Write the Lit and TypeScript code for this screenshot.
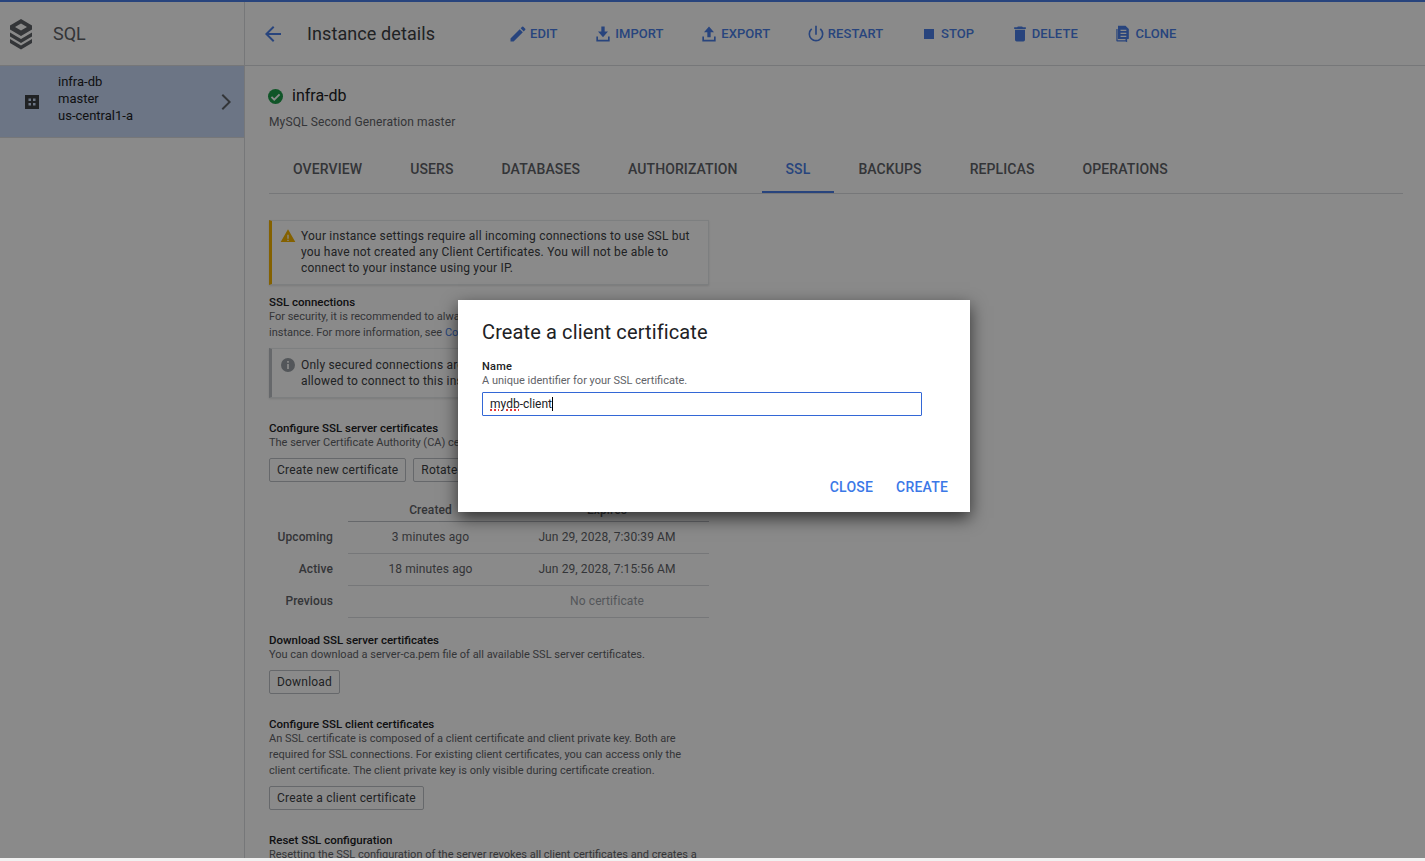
import { LitElement, html, css, svg } from 'lit';
import { customElement } from 'lit/decorators.js';

const ACTIONS = [
	{ label: 'EDIT', icon: svg`<path d="M3 17.25V21h3.75L17.81 9.94l-3.75-3.75L3 17.25zM20.71 7.04a1 1 0 0 0 0-1.41l-2.34-2.34a1 1 0 0 0-1.41 0l-1.83 1.83 3.75 3.750 1.83-1.83z"/>` },
	{ label: 'IMPORT', icon: svg`<path d="M10 3h4v6h4l-6 7-6-7h4V3z"/><path d="M4 15h2v4h12v-4h2v6H4z"/>` },
	{ label: 'EXPORT', icon: svg`<path d="M10 16v-6H6l6-7 6 7h-4v6h-4z"/><path d="M4 15h2v4h12v-4h2v6H4z"/>` },
	{ label: 'RESTART', icon: svg`<path d="M13 2h-2v11h2V2zm4.830 3.170-1.420 1.420A6.920 6.920 0 0 1 19 12a7 7 0 1 1-11.420-5.420L6.170 5.170A8.960 8.960 0 0 0 3 12a9 9 0 0 0 18 0c0-2.740-1.230-5.180-3.170-6.830z"/>` },
	{ label: 'STOP', icon: svg`<path d="M6 6h12v12H6z"/>` },
	{ label: 'DELETE', icon: svg`<path d="M6 19a2 2 0 0 0 2 2h8a2 2 0 0 0 2-2V7H6v12zM19 4h-3.500l-1-1h-5l-1 1H5v2h14V4z"/>` },
	{ label: 'CLONE', icon: svg`<path fill-rule="evenodd" d="M6 2h9l4 4v11a1 1 0 0 1-1 1H6V2zm3 5v1.500h7V7H9zm0 3.500V12h7v-1.500H9zM9 14v1.500h7V14H9z"/><path d="M4 6h1.500v13.500H15V18h2v4l-2-.900H5a1 1 0 0 1-1-1V6z"/>` },
];

const TABS = ['OVERVIEW', 'USERS', 'DATABASES', 'AUTHORIZATION', 'SSL', 'BACKUPS', 'REPLICAS', 'OPERATIONS'];

@customElement('app-root')
export class AppRoot extends LitElement {
	static styles = css`
		:host {
			display: block;
			position: relative;
			height: 861px;
			overflow: hidden;
			background: #f1f1f1;
			font-family: Roboto, 'Liberation Sans', sans-serif;
			font-size: 12px;
			color: #5f6368;
		}

		.stripe {
			height: 2px;
			background: #4a7fe8;
		}

		.page {
			display: grid;
			grid-template-columns: 245px 1fr;
			height: 856px;
			overflow: hidden;
			background: #fff;
		}

		.side {
			border-right: 1px solid #dadce0;
		}

		.side-head {
			display: flex;
			align-items: center;
			height: 63px;
			border-bottom: 1px solid #dadce0;
			padding-left: 9px;
			font-size: 18px;
			color: #5f6368;
		}

		.logo {
			width: 24px;
			height: 32px;
			margin-right: 20px;
			fill: #5f6368;
		}

		.instance {
			display: flex;
			align-items: center;
			height: 71px;
			background: #c7d8f5;
			border-bottom: 1px solid #dadce0;
			color: #202124;
			font-size: 13px;
			line-height: 17px;
		}

		.instance .grid-icon {
			width: 14px;
			height: 14px;
			margin: 0 19px 0 25px;
			fill: #3c4043;
		}

		.instance .names {
			flex: 1;
			padding-bottom: 6px;
		}

		.instance .chev {
			width: 24px;
			height: 24px;
			margin-right: 7px;
			fill: #5f6368;
		}

		.head {
			display: flex;
			align-items: center;
			height: 63px;
			border-bottom: 1px solid #dadce0;
			padding-left: 16px;
		}

		.back {
			width: 24px;
			height: 24px;
			fill: #4a7fe8;
			margin-right: 22px;
		}

		.head h1 {
			margin: 0;
			width: 201px;
			font-size: 18px;
			font-weight: 400;
			letter-spacing: 0.1px;
			color: #3c4043;
		}

		.action {
			display: flex;
			align-items: center;
			gap: 2px;
			margin-right: 35.6px;
			font-size: 13px;
			font-weight: 500;
			letter-spacing: 0.08px;
			color: #4a7fe8;
		}

		.action svg {
			width: 20px;
			height: 20px;
			fill: currentColor;
		}

		.body {
			padding: 0 22px 0 24px;
			overflow: hidden;
			min-width: 0;
		}

		.status {
			display: flex;
			align-items: center;
			gap: 9px;
			margin: 20px 0 0 -1px;
			font-size: 16px;
			color: #202124;
			line-height: 20px;
		}

		.status svg {
			width: 15px;
			height: 15px;
		}

		.kind {
			margin-top: 8px;
			line-height: 16px;
			letter-spacing: 0.12px;
		}

		.tabs {
			display: flex;
			margin-top: 15px;
			height: 48px;
			border-bottom: 1px solid #dadce0;
		}

		.tab {
			display: flex;
			align-items: center;
			padding: 2px 24px 0;
			font-size: 14px;
			font-weight: 500;
			letter-spacing: 0.1px;
			color: #5f6368;
			border-bottom: 2px solid transparent;
			height: 48px;
			box-sizing: border-box;
		}

		.tab.on {
			color: #4a7fe8;
			border-color: #4a7fe8;
		}

		.narrow {
			width: 440px;
			padding-top: 26px;
		}

		.note {
			display: flex;
			gap: 5px;
			box-sizing: border-box;
			padding: 7px 12px 8px 8px;
			font-size: 12px;
			line-height: 16px;
			letter-spacing: 0.2px;
			color: #3c4043;
			border: 1px solid #e8eaed;
			border-left: 3px solid #f4b400;
			box-shadow: 0 1px 2px rgba(0, 0, 0, 0.12);
		}

		.note svg {
			width: 16px;
			height: 16px;
			flex: none;
		}

		.note.info {
			border-left-color: #bdc1c6;
			margin-top: 7px;
			padding-top: 8px;
		}

		h3 {
			margin: 0;
			font-size: 11.5px;
			line-height: 14px;
			font-weight: 500;
			color: #202124;
		}

		p {
			margin: 0;
			font-size: 11px;
			line-height: 16px;
		}

		a {
			color: #4a7fe8;
		}

		.btn {
			display: inline-block;
			box-sizing: border-box;
			height: 24px;
			line-height: 22px;
			padding: 0 7px;
			border: 1px solid #bdc1c6;
			border-radius: 2px;
			font-size: 12px;
			letter-spacing: 0.2px;
			color: #3c4043;
			margin: 7px 4px 0 0;
		}

		table {
			border-collapse: collapse;
			width: 440px;
			margin-top: 17px;
			font-size: 12px;
			letter-spacing: 0.1px;
		}

		th {
			font-weight: 500;
			height: 22px;
			border-bottom: 1px solid #bdc1c6;
			text-align: center;
			padding: 0;
		}

		td {
			height: 29px;
			border-bottom: 1px solid #dadce0;
			text-align: center;
			padding: 0 0 2px;
		}

		th:first-child,
		td:first-child {
			border: 0;
			width: 64px;
			padding-right: 15px;
			text-align: right;
			font-weight: 500;
		}

		.c2 {
			width: 165px;
		}

		th:last-child,
		td:last-child {
			padding-right: 8px;
		}

		.none {
			color: #9aa0a6;
		}

		.scrim {
			position: absolute;
			inset: 0 0 3px 0;
			background: rgba(0, 0, 0, 0.46);
		}

		.dialog {
			position: absolute;
			left: 458px;
			top: 300px;
			width: 512px;
			height: 212px;
			box-sizing: border-box;
			padding: 19px 24px;
			background: #fff;
			box-shadow: 0 6px 16px rgba(0, 0, 0, 0.65);
			color: #5f6368;
		}

		.dialog h2 {
			margin: 0;
			font-size: 20px;
			line-height: 26px;
			font-weight: 400;
			letter-spacing: 0.12px;
			color: #202124;
		}

		.dialog label {
			display: block;
			margin-top: 15px;
			font-size: 11px;
			line-height: 14px;
			font-weight: 500;
			color: #202124;
			letter-spacing: 0.2px;
		}

		.dialog .hint {
			font-size: 11px;
			line-height: 14px;
		}

		.input {
			box-sizing: border-box;
			width: 440px;
			height: 24px;
			margin-top: 4px;
			padding-left: 7px;
			border: 1px solid #3367d6;
			border-radius: 1px;
			font-size: 12px;
			line-height: 22px;
			color: #202124;
		}

		.typo {
			text-decoration: underline dotted #e53935 1.5px;
			text-underline-offset: 1px;
		}

		.caret {
			display: inline-block;
			width: 1px;
			height: 14px;
			background: #000;
			vertical-align: -3px;
		}

		.dialog-actions {
			position: absolute;
			right: 22px;
			bottom: 17px;
			display: flex;
			gap: 23px;
			font-size: 14px;
			font-weight: 500;
			letter-spacing: 0.2px;
			color: #3b78e7;
		}
	`;

	render() {
		return html`
			<div class="stripe"></div>
			<div class="page">
				<aside class="side">
					<div class="side-head">
						<svg class="logo" viewBox="0 0 24 32">
							<path d="M12 1 23 7.500v4L12 18 1 11.500v-4L12 1zm0 4.500L6 9l6 3.500L18 9l-6-3.500z" fill-rule="evenodd" />
							<path d="M1 14.500 12 21l11-6.500v4L12 25 1 18.500z" />
							<path d="M1 21 12 27.500 23 21v4l-11 6.500L1 25z" />
						</svg>
						SQL
					</div>
					<div class="instance">
						<svg class="grid-icon" viewBox="0 0 14 14">
							<path fill-rule="evenodd" d="M0 0h14v14H0zM3.500 3.500v2.500H6V3.500zm4.500 0v2.500h2.500V3.500zM3.500 8v2.500H6V8zM8 8v2.500h2.500V8z" />
						</svg>
						<div class="names">infra-db<br />master<br />us-central1-a</div>
						<svg class="chev" viewBox="0 0 24 24"><path d="M8.600 5.400 10 4l8 8-8 8-1.400-1.400 6.600-6.600z" /></svg>
					</div>
				</aside>
				<main>
					<div class="head">
						<svg class="back" viewBox="0 0 24 24"><path d="M20 11H7.800l5.600-5.600L12 4l-8 8 8 8 1.400-1.400L7.800 13H20z" /></svg>
						<h1>Instance details</h1>
						${ACTIONS.map(
							(a) => html`<div class="action"><svg viewBox="0 0 24 24">${a.icon}</svg>${a.label}</div>`
						)}
					</div>
					<div class="body">
						<div class="status">
							<svg viewBox="0 0 24 24">
								<circle cx="12" cy="12" r="12" fill="#1e9e4a" />
								<path d="M5.500 12.500 10 17l8.500-8.500" fill="none" stroke="#fff" stroke-width="3" />
							</svg>
							infra-db
						</div>
						<div class="kind">MySQL Second Generation master</div>
						<div class="tabs">
							${TABS.map((t) => html`<div class="tab ${t === 'SSL' ? 'on' : ''}">${t}</div>`)}
						</div>
						<div class="narrow">
							<div class="note">
								<svg viewBox="0 0 24 24"><path fill="#f4b400" fill-rule="evenodd" d="M1 21 12 2l11 19H1zm10-11v6h2v-6h-2zm0 7.500v2h2v-2h-2z" /></svg>
								<div>Your instance settings require all incoming connections to use SSL but you have not created any Client Certificates. You will not be able to connect to your instance using your IP.</div>
							</div>
							<h3 style="margin-top:10px">SSL connections</h3>
							<p>For security, it is recommended to always use SSL encryption when connecting to your<br />instance. For more information, see <a>Configuring SSL</a></p>
							<div class="note info">
								<svg viewBox="0 0 24 24"><path fill="#9aa0a6" fill-rule="evenodd" d="M12 1.500a10.500 10.500 0 1 1 0 21 10.500 10.500 0 0 1 0-21zm-1.300 9v7.500h2.600v-7.500zm0-4.500v2.600h2.600V6z" /></svg>
								<div>Only secured connections are<br />allowed to connect to this instance.</div>
							</div>
							<h3 style="margin-top:23px">Configure SSL server certificates</h3>
							<p>The server Certificate Authority (CA) certificate is required in SSL connections.</p>
							<span class="btn">Create new certificate</span>
							<span class="btn">Rotate certificate</span>
							<table>
								<tr><th></th><th class="c2">Created</th><th>Expires</th></tr>
								<tr><td>Upcoming</td><td>3 minutes ago</td><td>Jun 29, 2028, 7:30:39 AM</td></tr>
								<tr><td>Active</td><td>18 minutes ago</td><td>Jun 29, 2028, 7:15:56 AM</td></tr>
								<tr><td>Previous</td><td></td><td class="none">No certificate</td></tr>
							</table>
							<h3 style="margin-top:15px">Download SSL server certificates</h3>
							<p>You can download a server-ca.pem file of all available SSL server certificates.</p>
							<span class="btn">Download</span>
							<h3 style="margin-top:23px">Configure SSL client certificates</h3>
							<p>An SSL certificate is composed of a client certificate and client private key. Both are required for SSL connections. For existing client certificates, you can access only the client certificate. The client private key is only visible during certificate creation.</p>
							<span class="btn">Create a client certificate</span>
							<h3 style="margin-top:23px">Reset SSL configuration</h3>
							<p>Resetting the SSL configuration of the server revokes all client certificates and creates a new server certificate.</p>
						</div>
					</div>
				</main>
			</div>
			<div class="scrim"></div>
			<div class="dialog">
				<h2>Create a client certificate</h2>
				<label>Name</label>
				<div class="hint">A unique identifier for your SSL certificate.</div>
				<div class="input"><span class="typo">mydb</span>-client<span class="caret"></span></div>
				<div class="dialog-actions"><span>CLOSE</span><span>CREATE</span></div>
			</div>
		`;
	}
}
